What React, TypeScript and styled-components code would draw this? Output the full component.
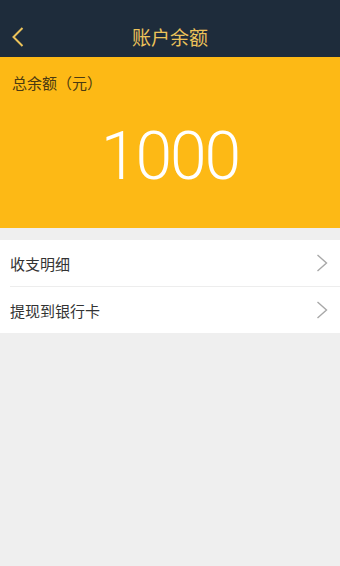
import React from 'react';
import styled, { createGlobalStyle } from 'styled-components';

const GlobalStyle = createGlobalStyle`
  html, body {
    margin: 0;
    padding: 0;
    background: #efefef;
    font-family: 'Noto Sans CJK SC', 'Noto Sans', sans-serif;
  }
`;

const Page = styled.div`
  width: 340px;
  min-height: 566px;
  background: #efefef;
  display: flex;
  flex-direction: column;
`;

const Header = styled.header`
  height: 57px;
  background: #1e2c3b;
  display: flex;
  align-items: center;
  justify-content: center;
  position: relative;
`;

const BackButton = styled.button`
  position: absolute;
  left: 8px;
  top: 24px;
  width: 20px;
  height: 26px;
  padding: 0;
  border: none;
  background: none;
  display: flex;
  align-items: center;
  justify-content: center;
`;

const Title = styled.h1`
  margin: 0;
  margin-top: 15px;
  font-size: 19px;
  font-weight: 400;
  color: #ecc35a;
  line-height: 1;
`;

const BalanceCard = styled.section`
  height: 171px;
  background: #fdb915;
  display: flex;
  flex-direction: column;
`;

const BalanceLabel = styled.div`
  padding: 15px 0 0 12px;
  font-size: 15px;
  line-height: 22px;
  color: #4b3a12;
`;

const Amount = styled.div`
  margin-top: 28px;
  text-align: center;
  font-family: Roboto, 'Noto Sans', sans-serif;
  font-weight: 300;
  font-size: 66px;
  line-height: 70px;
  letter-spacing: -2px;
  color: #ffffff;
`;

const Menu = styled.ul`
  list-style: none;
  margin: 12px 0 0;
  padding: 0;
  background: #ffffff;
`;

const MenuItem = styled.li<{ $divider?: boolean }>`
  height: 46px;
  padding: 0 12px 0 10px;
  display: flex;
  align-items: center;
  justify-content: space-between;
  font-size: 15px;
  color: #333333;
  border-top: ${(p) => (p.$divider ? '1px solid #ededed' : 'none')};
  margin-left: ${(p) => (p.$divider ? '10px' : '0')};
  padding-left: ${(p) => (p.$divider ? '0' : '10px')};
`;

const Chevron = () => (
  <svg width="12" height="18" viewBox="0 0 12 18">
    <polyline points="1.5,1 10.5,9 1.5,17" fill="none" stroke="#a8a8a8" strokeWidth="1.4" />
  </svg>
);

const BackIcon = () => (
  <svg width="12" height="20" viewBox="0 0 12 20">
    <polyline points="10.5,1 1.5,10 10.5,19" fill="none" stroke="#ecc35a" strokeWidth="2" />
  </svg>
);

const App: React.FC = () => {
  return (
    <>
      <GlobalStyle />
      <Page>
        <Header>
          <BackButton>
            <BackIcon />
          </BackButton>
          <Title>账户余额</Title>
        </Header>
        <BalanceCard>
          <BalanceLabel>总余额（元）</BalanceLabel>
          <Amount>1000</Amount>
        </BalanceCard>
        <Menu>
          <MenuItem>
            <span>收支明细</span>
            <Chevron />
          </MenuItem>
          <MenuItem $divider>
            <span>提现到银行卡</span>
            <Chevron />
          </MenuItem>
        </Menu>
      </Page>
    </>
  );
};

export default App;
